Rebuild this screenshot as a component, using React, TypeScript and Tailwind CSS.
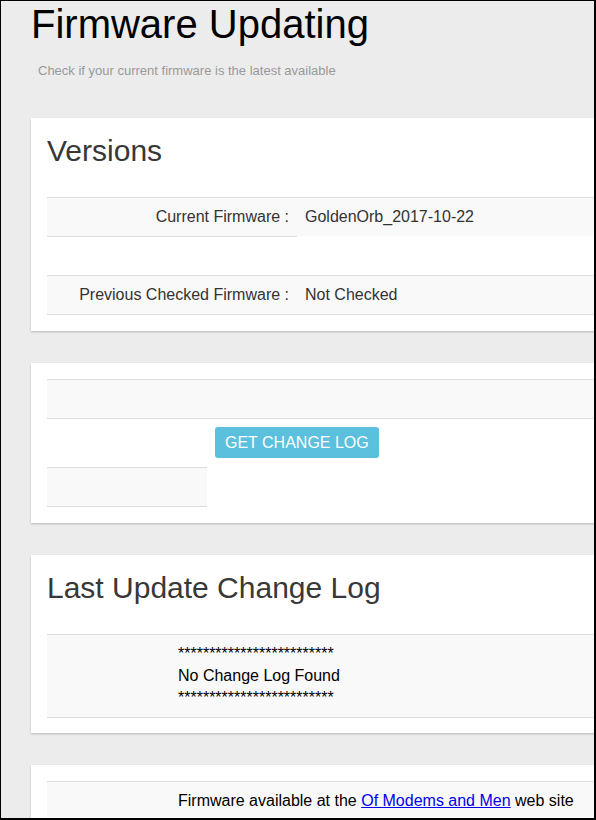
const font = { fontFamily: '"Liberation Sans", Arial, sans-serif' };

function Card({ children, className = '' }: { children: React.ReactNode; className?: string }) {
  return (
    <div className={`ml-[30px] w-[620px] bg-white px-4 pt-4 shadow-[0_1px_2px_rgba(0,0,0,0.22)] ${className}`}>
      {children}
    </div>
  );
}

function CardTitle({ children }: { children: React.ReactNode }) {
  return <h2 className="text-[30px] leading-[33px] text-[#383838] font-normal">{children}</h2>;
}

export default function App() {
  return (
    <div
      style={font}
      className="w-[596px] h-[820px] overflow-hidden bg-[#ececec] border-black border-l border-t border-r-2 border-b-2 text-[#333]"
    >
      {/* Page header */}
      <h1 className="ml-[30px] text-[40px] leading-[46px] text-black font-normal whitespace-nowrap">
        Firmware Updating
      </h1>
      <p className="ml-[37px] mt-4 text-[13px] leading-4 text-[#999]">
        Check if your current firmware is the latest available
      </p>

      {/* Versions */}
      <Card className="mt-[39px] pb-4">
        <CardTitle>Versions</CardTitle>
        <div className="mt-[30px] border-t border-[#ddd] text-[16px] leading-[22px]">
          <div className="flex items-start h-[39px]">
            <div className="w-[250px] h-[39px] bg-[#f9f9f9] border-b border-[#ddd] py-2 pr-2 text-right">
              Current Firmware :
            </div>
            <div className="flex-1 h-[38px] bg-[#f9f9f9] py-2 pl-2">GoldenOrb_2017-10-22</div>
          </div>
          <div className="h-[38px]" />
          <div className="flex border-t border-b border-[#ddd] bg-[#f9f9f9]">
            <div className="w-[250px] py-2 pr-2 text-right">Previous Checked Firmware :</div>
            <div className="flex-1 py-2 pl-2">Not Checked</div>
          </div>
        </div>
      </Card>

      {/* Change log button */}
      <Card className="mt-8 pb-4">
        <div className="border-t border-[#ddd] text-[16px] leading-[22px]">
          <div className="h-[39px] bg-[#f9f9f9] border-b border-[#ddd]" />
          <div className="flex">
            <div className="w-[160px]">
              <div className="h-[48px]" />
              <div className="h-[40px] bg-[#f9f9f9] border-t border-b border-[#ddd]" />
            </div>
            <div className="flex-1 pt-2 pl-2">
              <button className="h-[31px] rounded-[3px] bg-[#5bc0de] px-[10px] text-[16px] leading-[21px] text-white">
                GET CHANGE LOG
              </button>
            </div>
          </div>
        </div>
      </Card>

      {/* Last update change log */}
      <Card className="mt-8 pb-[15px]">
        <CardTitle>Last Update Change Log</CardTitle>
        <div className="mt-[30px] border-t border-b border-[#ddd] bg-[#f9f9f9] py-2 pl-[131px] text-[16px] leading-[22px] text-black">
          <div>*************************</div>
          <div>No Change Log Found</div>
          <div>*************************</div>
        </div>
      </Card>

      {/* Firmware source */}
      <Card className="mt-8 pb-4">
        <div className="border-t border-b border-[#ddd] bg-[#f9f9f9] py-2 pl-[131px] text-[16px] leading-[22px] text-black whitespace-nowrap">
          Firmware available at the <a href="#" className="text-[#0000ee] underline">Of Modems and Men</a> web site
        </div>
      </Card>
    </div>
  );
}
